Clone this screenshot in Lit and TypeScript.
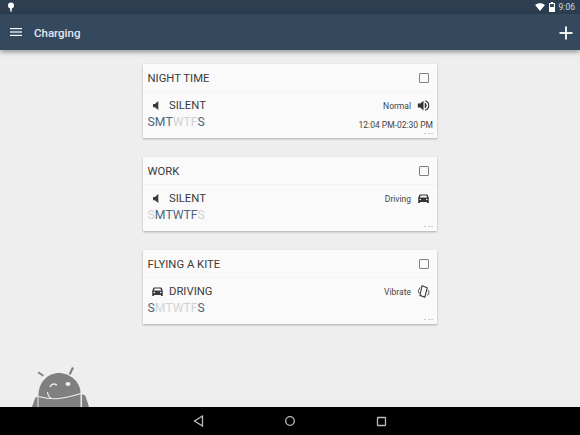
import { LitElement, html, css, svg } from "lit";
import { customElement } from "lit/decorators.js";

const speakerLow = svg`<path d="M2.500 6h2.300L9 2.600v10.800L4.800 10H2.500z"/>`;
const speakerHigh = svg`<path d="M1 5.500h3L8 2v12l-4-3.500H1z"/><path d="M9.500 4.300a4 4 0 0 1 0 7.400z"/><path d="M10 1.500a6.700 6.700 0 0 1 0 13v-1.500a5.200 5.200 0 0 0 0-10z"/>`;
const car = svg`<path fill-rule="evenodd" d="M3.800 3h8.400c.5 0 .9.300 1 .7L14.500 7.400v5.400c0 .4-.3.700-.7.700h-.9c-.4 0-.7-.3-.7-.7v-.6H3.800v.6c0 .4-.3.700-.7.700h-.9c-.4 0-.7-.3-.7-.7V7.400L2.800 3.700c.1-.4.500-.7 1-.7zM3.500 6.800h9l-1-2.600H4.500zM4 8.200a1 1 0 1 0 0 2 1 1 0 0 0 0-2zm8 0a1 1 0 1 0 0 2 1 1 0 0 0 0-2z"/>`;
const vibrate = svg`<g fill="none" stroke="currentColor"><path stroke-width="1.300" d="M6.200 1l6.400 2.500-3 11.500-6-2.300z"/><path stroke-width="1" d="M3.800 3L1.500 7l1.200 3.500M13.500 6l1.500 3-2 4"/></g>`;

interface Profile {
  title: string; icon: unknown; mode: string; right: string; rightIcon: unknown;
  days: boolean[]; time?: string;
}

const profiles: Profile[] = [
  { title: "NIGHT TIME", icon: speakerLow, mode: "SILENT", right: "Normal", rightIcon: speakerHigh,
    days: [true, true, true, false, false, false, true], time: "12:04 PM-02:30 PM" },
  { title: "WORK", icon: speakerLow, mode: "SILENT", right: "Driving", rightIcon: car,
    days: [false, true, true, true, true, true, false] },
  { title: "FLYING A KITE", icon: car, mode: "DRIVING", right: "Vibrate", rightIcon: vibrate,
    days: [true, false, false, false, false, false, true] },
];

@customElement("app-root")
export class AppRoot extends LitElement {
  static styles = css`
    :host {
      display: flex; flex-direction: column; width: 580px; height: 435px; overflow: hidden;
      background: #eeeeee; font-family: Roboto, "Liberation Sans", sans-serif; position: relative;
    }
    .status { height: 14px; flex: none; background: #2c3e50; display: flex; align-items: center; padding: 0 5px 0 7px; color: #fff; }
    .status svg { display: block; }
    .status .pin { margin-right: auto; }
    .status .wifi { margin-right: 4px; }
    .status .batt { margin-right: 4px; }
    .status .clock { font-size: 8.500px; color: #d4d9de; }
    .bar {
      height: 36px; flex: none; background: #34495e; display: flex; align-items: center; color: #fff;
      padding: 0 7px 0 10px; box-shadow: 0 2px 5px rgba(0,0,0,.38); position: relative; z-index: 1;
    }
    .bar .title { font-size: 11.500px; font-weight: 500; margin: 1px 0 0 12px; color: #e4e8ec; flex: 1; }
    .plus { margin-top: 1px; }
    .list { flex: 1; display: flex; flex-direction: column; align-items: center; padding-top: 14px; gap: 19px; }
    .card {
      width: 294px; height: 74px; background: #fafafa; box-shadow: 0 1px 2px rgba(0,0,0,.28);
      display: flex; flex-direction: column; position: relative; color: #333;
    }
    .head {
      height: 27px; flex: none; display: flex; align-items: center; justify-content: space-between;
      padding: 0 8px 0 4.500px; border-bottom: 1px solid #f4f4f4;
      font-size: 11.300px; color: #3a3a3a;
    }
    .head span:first-child { padding-top: 2px; }
    .check { width: 8px; height: 8px; border: 1.500px solid #808080; border-radius: 1px; }
    .body { flex: 1; display: flex; justify-content: space-between; padding: 0 4px 0 4.500px; }
    .left { display: flex; flex-direction: column; }
    .mode { display: flex; align-items: center; height: 13px; margin-top: 7px; font-size: 11.300px; color: #3a3a3a; }
    .mode svg { margin: 0 5px 0 3.500px; color: #3a3a3a; }
    .days { font-size: 12.200px; margin-top: 3px; line-height: 14px; display: flex; }
    .on { color: #4f667d; }
    .off { color: #cfd3d6; }
    .right { display: flex; flex-direction: column; align-items: flex-end; }
    .state { display: flex; align-items: center; height: 13px; margin-top: 7px; font-size: 8.500px; color: #444; }
    .state svg { margin-left: 6px; margin-right: 3px; color: #333; }
    .time { font-size: 8.500px; color: #444; margin-top: 7px; line-height: 12px; }
    .dots { position: absolute; right: 4px; bottom: 4px; display: flex; gap: 1.500px; }
    .dots i { width: 2px; height: 1px; background: #c8c8c8; display: block; }
    .nav { height: 28px; flex: none; background: #000; display: flex; align-items: center; justify-content: center; color: #bdbdbd; }
    .nav svg { display: block; margin: 0 40px; }
    .droid { position: absolute; left: 30px; bottom: 28px; display: block; }
  `;

  private card(p: Profile) {
    return html`<div class="card">
      <div class="head"><span>${p.title}</span><span class="check"></span></div>
      <div class="body">
        <div class="left">
          <div class="mode"><svg width="13" height="13" viewBox="0 0 16 16" fill="currentColor">${p.icon}</svg>${p.mode}</div>
          <div class="days">${"SMTWTFS".split("").map((d, i) => html`<span class=${p.days[i] ? "on" : "off"}>${d}</span>`)}</div>
        </div>
        <div class="right">
          <div class="state">${p.right}<svg width="13" height="13" viewBox="0 0 16 16" fill="currentColor">${p.rightIcon}</svg></div>
          ${p.time ? html`<div class="time">${p.time}</div>` : ""}
        </div>
      </div>
      <div class="dots"><i></i><i></i><i></i></div>
    </div>`;
  }

  render() {
    return html`
      <div class="status">
        <svg class="pin" width="8" height="10" viewBox="0 0 8 10" fill="currentColor"><circle cx="4" cy="3.500" r="3"/><rect x="3.200" y="6" width="1.600" height="3.500"/></svg>
        <svg class="wifi" width="10" height="8" viewBox="0 0 11 9" fill="currentColor"><path d="M0 2.200C3 -.4 8 -.4 11 2.200L5.500 9z"/></svg>
        <svg class="batt" width="6" height="10" viewBox="0 0 6 10"><path fill="#fff" d="M2 0h2v1h2v9H0V1h2z"/><rect x="1" y="2" width="4" height="3" fill="#3c4e60"/></svg>
        <span class="clock">9:06</span>
      </div>
      <div class="bar">
        <svg width="12" height="8" viewBox="0 0 12 8" fill="currentColor"><rect y="0" width="12" height="1.200"/><rect y="3.400" width="12" height="1.200"/><rect y="6.800" width="12" height="1.200"/></svg>
        <span class="title">Charging</span>
        <svg class="plus" width="14" height="14" viewBox="0 0 14 14" fill="currentColor"><rect x="6.100" y="0.500" width="1.800" height="13"/><rect x="0.500" y="6.100" width="13" height="1.800"/></svg>
      </div>
      <div class="list">${profiles.map((p) => this.card(p))}</div>
      <div class="nav">
        <svg width="11" height="12" viewBox="0 0 11 12" fill="none" stroke="currentColor" stroke-width="1.300"><path d="M9.500 1L1.500 6l8 5z"/></svg>
        <svg width="12" height="12" viewBox="0 0 12 12" fill="none" stroke="currentColor" stroke-width="1.300"><circle cx="6" cy="6" r="4.300"/></svg>
        <svg width="11" height="11" viewBox="0 0 11 11" fill="none" stroke="currentColor" stroke-width="1.300"><rect x="1.500" y="1.500" width="8" height="8" rx=".5"/></svg>
      </div>
      <svg class="droid" width="60" height="42" viewBox="0 0 60 42">
        <g fill="#808080">
          <path d="M7.500 8l1-1.500 5.500 3.500-1.200 1.500z"/>
          <path d="M42 2l2 1-3.500 7-1.800-1z"/>
          <path d="M8.500 42V30C8.500 17 18 8 29 8S50.500 17 50.500 28V42z"/>
          <path d="M2 42L5 33.500Q6 31.500 7.500 32V42z"/>
          <path d="M59 42L55.500 31Q54.500 29 52 29.500V42z"/>
        </g>
        <path d="M8.500 31.500Q20 34.500 29 33.500T51 28.500" fill="none" stroke="#eee" stroke-width="1.200"/>
        <path d="M20 22c1.500-3 4-4 6.800-1.800" fill="none" stroke="#eee" stroke-width="1.500"/>
        <ellipse cx="38" cy="19" rx="2.500" ry="2" fill="#eee"/>
        <path d="M17.500 27c.3 3 1.500 5 3.500 6" fill="none" stroke="#eee" stroke-width="1.200"/>
      </svg>
    `;
  }
}
